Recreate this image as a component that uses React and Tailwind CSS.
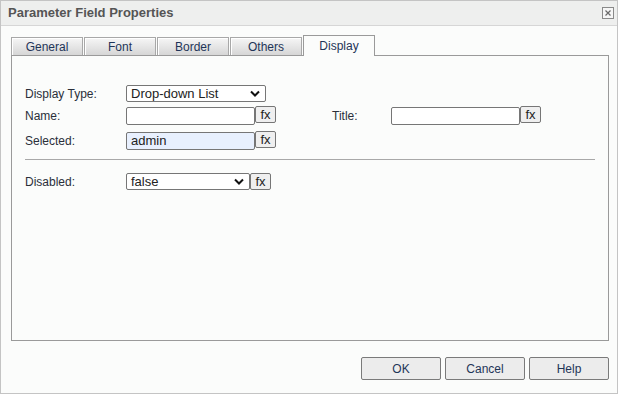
import React from "react";

const font = { fontFamily: '"Liberation Sans", Arial, sans-serif' };

function Chevron() {
  return (
    <svg width="10" height="7" viewBox="0 0 10 7" className="shrink-0">
      <path d="M1 1.5 L5 5.5 L9 1.5" fill="none" stroke="#111" strokeWidth="2" />
    </svg>
  );
}

function Select({ value, w }) {
  return (
    <div className={`${w} h-[17px] border border-[#767676] rounded-[2px] bg-white flex items-center justify-between pl-[4px] pr-[5px] text-[13px] text-[#222]`}>
      <span>{value}</span>
      <Chevron />
    </div>
  );
}

function Input({ value = "", bg = "bg-white" }) {
  return (
    <div className={`w-[129px] h-[18px] border border-[#767676] rounded-[2px] ${bg} flex items-center pl-[4px] text-[13px] text-[#222]`}>
      {value}
    </div>
  );
}

function Fx({ up }) {
  return (
    <div className={`w-[21px] h-[17px] border border-[#767676] rounded-[2px] bg-[#efefef] flex items-center justify-center text-[13px] text-[#222] leading-none pb-[1px] ${up ? "mb-[2px]" : ""}`}>
      fx
    </div>
  );
}

function Tab({ label, active }) {
  if (active)
    return (
      <div className="relative z-10 w-[72px] h-[21px] -mb-[1px] border border-b-0 border-[#9a9a9a] bg-[#fbfcfb] flex items-center justify-center text-[12px] text-[#1f3558]">
        {label}
      </div>
    );
  return (
    <div className="w-[72px] h-[18px] border border-b-0 border-[#a8a8a8] bg-gradient-to-b from-[#f6f6f6] to-[#d6d6d6] shadow-[inset_1px_1px_0_#ffffff] flex items-center justify-center text-[12px] text-[#1f3558]">
      {label}
    </div>
  );
}

function Button({ label }) {
  return (
    <div className="w-[80px] h-[23px] border border-[#7a7a7a] rounded-[2px] bg-[#ececec] flex items-center justify-center text-[12px] text-[#1f3558]">
      {label}
    </div>
  );
}

export default function App() {
  return (
    <div className="w-[620px] h-[395px] bg-white" style={font}>
      <div className="w-[618px] h-[394px] border border-[#c4c4c4] bg-[#fbfcfb] flex flex-col">
        <div className="h-[25px] shrink-0 bg-[#eeefee] border-b border-[#d6d6d6] flex items-center justify-between pl-[7px] pr-[3px]">
          <span className="text-[13px] font-bold text-[#555]">Parameter Field Properties</span>
          <svg width="12" height="12" viewBox="0 0 12 12" className="mb-[1px]">
            <rect x="0.5" y="0.5" width="11" height="11" fill="#f6f6f6" stroke="#8a8a8a" />
            <path d="M3.5 3.5 L8.5 8.5 M8.5 3.5 L3.5 8.5" stroke="#6a6a6a" strokeWidth="1.2" />
          </svg>
        </div>
        <div className="pl-[10px] pr-[8px] pt-[9px] flex flex-col">
          <div className="flex items-end gap-[1px] h-[20px]">
            <Tab label="General" />
            <Tab label="Font" />
            <Tab label="Border" />
            <Tab label="Others" />
            <Tab label="Display" active />
          </div>
          <div className="h-[286px] border border-[#9a9a9a] bg-[#fbfcfb] pl-[13px] pr-[13px] pt-[29px] text-[12px] text-[#2a2f3a]">
            <div className="flex items-center h-[17px]">
              <span className="w-[101px]">Display Type:</span>
              <Select value="Drop-down List" w="w-[140px]" />
            </div>
            <div className="flex items-center h-[19px] mt-[4px]">
              <span className="w-[101px]">Name:</span>
              <Input />
              <Fx up />
              <span className="ml-[56px] w-[59px]">Title:</span>
              <Input />
              <Fx up />
            </div>
            <div className="flex items-center h-[19px] mt-[6px]">
              <span className="w-[101px]">Selected:</span>
              <Input value="admin" bg="bg-[#e8f0fe]" />
              <Fx up />
            </div>
            <div className="h-px bg-[#a8a8a8] mt-[9px]" />
            <div className="flex items-center h-[17px] mt-[13px]">
              <span className="w-[101px]">Disabled:</span>
              <Select value="false" w="w-[124px]" />
              <Fx />
            </div>
          </div>
          <div className="flex justify-end gap-[4px] mt-[16px]">
            <Button label="OK" />
            <Button label="Cancel" />
            <Button label="Help" />
          </div>
        </div>
      </div>
    </div>
  );
}
